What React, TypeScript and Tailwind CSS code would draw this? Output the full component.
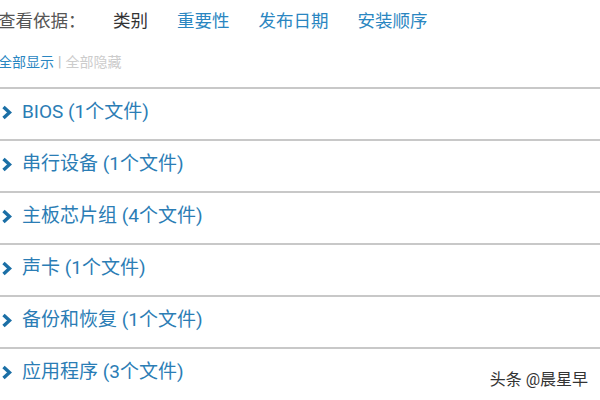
import React from 'react';

const tabs = [
  { label: '类别', active: true },
  { label: '重要性', active: false },
  { label: '发布日期', active: false },
  { label: '安装顺序', active: false },
];

const groups = [
  'BIOS (1个文件)',
  '串行设备 (1个文件)',
  '主板芯片组 (4个文件)',
  '声卡 (1个文件)',
  '备份和恢复 (1个文件)',
  '应用程序 (3个文件)',
];

function Chevron() {
  return (
    <svg width="11" height="15" viewBox="0 0 11 15" className="shrink-0">
      <path d="M2.5 2 L8.5 7.5 L2.5 13" fill="none" stroke="#1b6fa6" strokeWidth="3.4" strokeLinejoin="miter" />
    </svg>
  );
}

export default function App() {
  return (
    <div
      className="relative w-[600px] h-[400px] overflow-hidden bg-white"
      style={{ fontFamily: "Roboto, 'Noto Sans CJK SC', sans-serif" }}
    >
      {/* sort by */}
      <div className="flex items-center h-[43px] pb-[1px] -ml-[2px] text-[17.5px]">
        <span className="text-[#555] w-[115px]">查看依据：</span>
        {tabs.map((t) => (
          <span
            key={t.label}
            className={`mr-[29px] ${t.active ? 'text-[#333]' : 'text-[#2a86c1]'}`}
          >
            {t.label}
          </span>
        ))}
      </div>

      {/* show / hide */}
      <div className="flex items-center h-[38px] -ml-[2px] text-[14px]">
        <span className="text-[#2a86c1]">全部显示</span>
        <span className="mx-[4px] text-[#bbb]">|</span>
        <span className="text-[#ccc]">全部隐藏</span>
      </div>

      {/* groups */}
      <div className="mt-[6px]">
        {groups.map((g) => (
          <div
            key={g}
            className="flex items-center gap-[10px] h-[52px] pl-[1px] pb-[3px] border-t-2 border-[#c8c8c8]"
          >
            <Chevron />
            <span className="text-[19px] text-[#2b7db5]">{g}</span>
          </div>
        ))}
      </div>

      <div className="absolute right-[12px] bottom-[8px] text-[16px] text-[#333] [text-shadow:0_0_2px_#fff]">
        头条 @晨星早
      </div>
    </div>
  );
}
